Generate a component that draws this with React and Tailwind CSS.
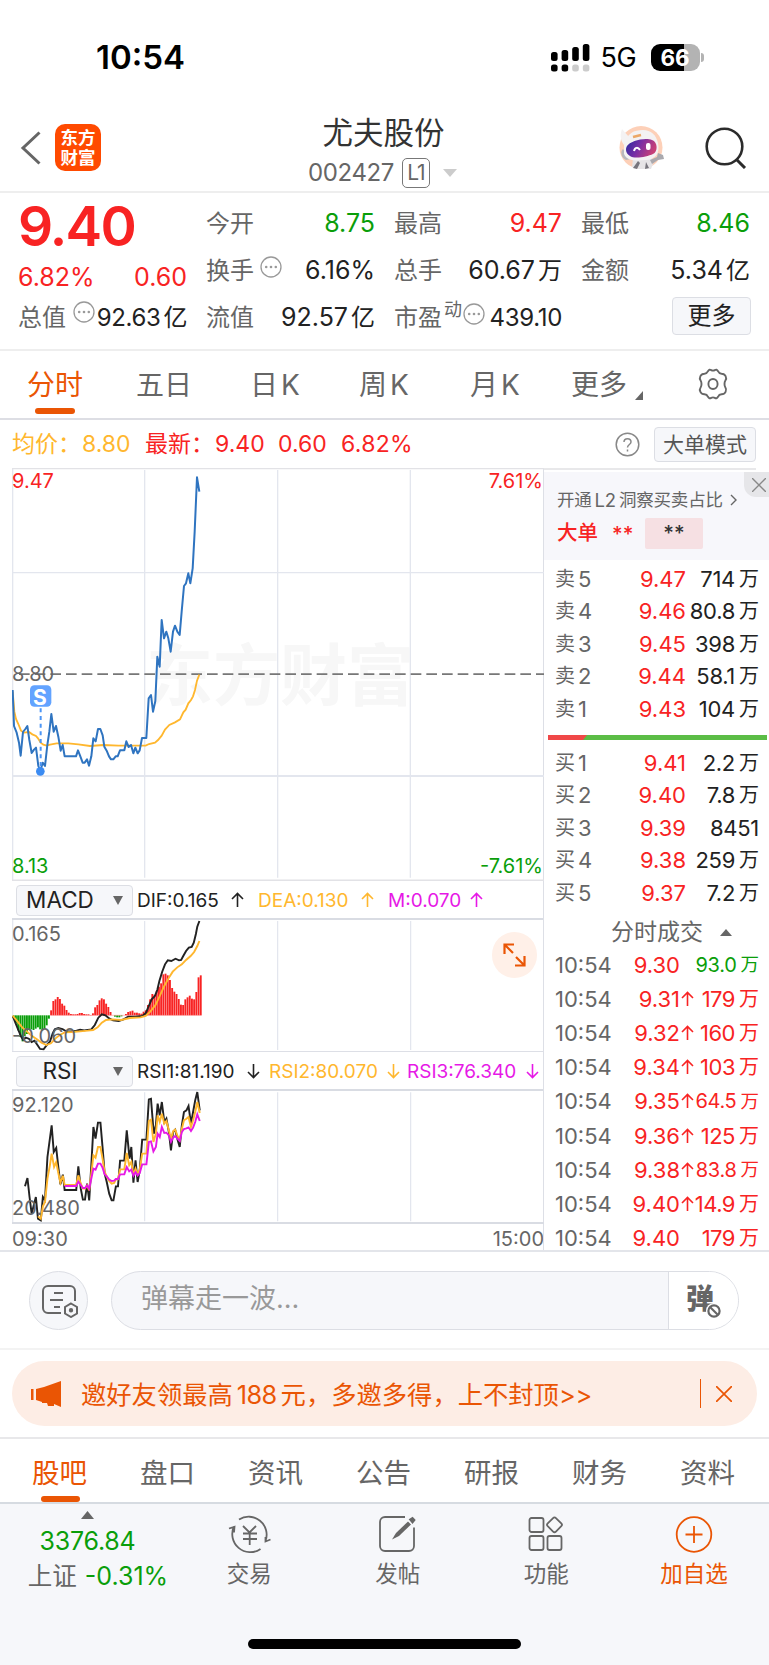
import React from "react";

const PRICE =
  "38,675 42,783 50,803 57,833 62,872 69,801 76,792 82,783 88,825 95,864 102,854 108,848 115,903 121,918 128,893 135,903 142,840 148,800 154,747 161,800 168,783 175,815 182,857 188,840 194,874 228,874 234,856 241,874 248,893 254,893 261,883 267,902 274,874 280,820 287,829 294,792 301,792 308,811 313,845 320,857 327,874 333,883 340,883 347,874 353,874 360,856 373,856 379,829 386,846 393,840 400,865 406,848 413,865 419,856 426,819 439,819 446,700 453,690 459,740 466,708 472,575 479,605 485,465 492,520 499,500 505,520 512,560 519,500 525,482 532,500 539,510 545,440 552,363 558,355 565,325 571,355 578,310 584,200 591,37 598,80";
const AVERAGE =
  "38,680 43,740 48,762 55,777 63,797 72,803 87,801 97,808 108,813 114,820 122,833 130,839 140,842 150,839 170,835 205,835 235,838 270,843 310,840 355,842 437,842 447,837 465,833 474,825 485,812 495,794 508,780 525,772 540,763 550,742 557,734 565,715 573,705 579,694 585,675 591,647 598,629";

const BARS = [
  -8, -25, -45, -65, -78, -62, -56, -44, -42, -44, -40, -36, -42, -45, -40, -30, -10, 15, 43, 48, 55, 49, 35, 29, 16, 8,
  4, 3, 3, 4, 7, 7, 4, 3, 3, 1, 6, 24, 31, 45, 51, 48, 35, 25, 10, 0, -4, -6, -6, -3, 0, 4, 10, 12, 14, 8, 8, 6, 5,
  11, 15, 31, 48, 64, 61, 74, 86, 96, 123, 125, 120, 106, 82, 71, 64, 49, 32, 31, 48, 54, 59, 50, 48, 70, 114, 120,
];
const DIF =
  "36,438 45,462 52,480 60,500 66,510 73,503 82,506 90,516 98,512 106,524 114,537 124,538 134,524 142,515 150,490 156,478 166,474 178,477 188,484 205,484 218,482 228,479 240,481 260,478 270,465 280,443 290,433 300,436 312,446 322,451 338,453 350,449 365,440 385,440 405,438 415,430 425,405 432,388 441,378 448,360 454,333 462,305 470,283 478,271 488,273 500,266 510,271 516,270 522,258 530,243 538,233 546,231 552,218 558,192 562,170 568,153";
const DEA =
  "36,437 50,455 63,472 77,485 90,497 105,508 118,518 132,525 145,520 158,505 170,495 184,487 205,486 228,484 250,482 265,480 278,472 290,458 302,450 320,448 345,450 370,444 400,442 415,438 428,425 443,405 455,378 467,350 480,325 492,305 505,292 518,283 530,270 543,258 553,246 562,228 568,213";

const RSI1 =
  "71,408 78,383 84,440 90,490 96,465 102,440 108,505 116,510 122,440 128,450 135,320 147,225 153,305 160,293 166,350 172,402 179,373 184,419 217,419 223,348 230,415 236,448 242,448 248,400 254,450 260,345 266,230 272,265 279,217 286,217 292,290 298,370 304,395 311,430 318,450 323,450 330,408 336,408 342,331 354,331 361,240 369,325 374,290 380,397 386,330 392,395 398,360 405,268 417,268 424,147 430,145 438,250 444,225 449,160 455,195 461,155 468,215 474,205 481,245 487,300 493,245 499,238 505,265 512,290 518,225 524,185 531,180 537,167 544,220 550,185 556,150 562,125 569,180";
const RSI2 =
  "108,498 116,505 122,468 128,455 135,385 142,345 147,310 154,350 160,335 166,368 172,397 179,376 184,404 217,404 223,375 230,400 236,415 242,415 248,405 254,420 260,370 266,315 272,322 279,290 286,290 292,325 298,365 304,378 311,392 318,400 325,398 330,387 336,387 342,357 354,357 361,308 368,345 374,335 380,374 386,355 392,372 398,357 405,310 417,310 424,212 430,208 437,275 444,250 449,195 455,215 461,190 468,220 474,212 481,240 487,266 493,243 499,238 505,255 512,268 518,235 524,210 531,205 537,200 544,230 550,210 556,185 562,155 569,188";
const RSI3 =
  "184,407 217,407 223,394 230,404 236,413 242,413 248,405 254,415 260,385 266,355 272,358 279,340 286,340 292,352 298,372 304,378 311,388 318,392 325,391 330,386 336,386 342,372 354,372 361,350 368,363 374,358 380,376 386,365 392,375 398,368 405,342 417,342 424,275 430,273 437,303 444,290 449,250 455,260 461,230 468,248 474,247 481,255 487,275 493,262 499,257 505,264 512,272 518,245 524,236 531,234 537,231 544,242 550,232 556,215 562,192 569,212";

const sells = [
  ["卖5", "9.47", "714", "万"],
  ["卖4", "9.46", "80.8", "万"],
  ["卖3", "9.45", "398", "万"],
  ["卖2", "9.44", "58.1", "万"],
  ["卖1", "9.43", "104", "万"],
];
const buys = [
  ["买1", "9.41", "2.2", "万"],
  ["买2", "9.40", "7.8", "万"],
  ["买3", "9.39", "8451", ""],
  ["买4", "9.38", "259", "万"],
  ["买5", "9.37", "7.2", "万"],
];
const trades = [
  ["9.30", "", "93.0"],
  ["9.31", "↑", "179"],
  ["9.32", "↑", "160"],
  ["9.34", "↑", "103"],
  ["9.35", "↑", "64.5"],
  ["9.36", "↑", "125"],
  ["9.38", "↑", "83.8"],
  ["9.40", "↑", "14.9"],
  ["9.40", "", "179"],
];

const Arrow = ({ down, className = "" }) => (
  <svg className={`inline-block shrink-0 ${className}`} width="13" height="16" viewBox="0 0 13 16" fill="none" stroke="currentColor" strokeWidth="1.6">
    <path d={down ? "M6.5 1v13M1 9l5.500 5.500L12 9" : "M6.500 15V2M1 7l5.500-5.500L12 7"} />
  </svg>
);

const Dots = ({ className = "" }) => (
  <svg className={`shrink-0 ${className}`} width="22" height="22" viewBox="0 0 22 22">
    <circle cx="11" cy="11" r="10" fill="none" stroke="#999" strokeWidth="1.3" />
    <circle cx="6.200" cy="11" r="1.300" fill="#999" />
    <circle cx="11" cy="11" r="1.300" fill="#999" />
    <circle cx="15.800" cy="11" r="1.300" fill="#999" />
  </svg>
);

const Num = ({ children, unit }) => (
  <span className="flex items-center">
    <span className="text-[25px]">{children}</span>
    {unit && <span className="ml-[3px]">{unit}</span>}
  </span>
);

const Stat = ({ label, value, unit, color = "text-[#222]", children }) => (
  <div className="flex h-[47px] items-center justify-between">
    <div className="flex items-center text-[#666]">
      {label}
      {children}
    </div>
    <div className={color}>
      <Num unit={unit}>{value}</Num>
    </div>
  </div>
);

const StatusBar = () => (
  <div className="flex h-[115px] items-start justify-between pt-[37px] pr-[65px] pl-[96px]">
    <span className="text-[33px] leading-[40px] font-semibold text-black">10:54</span>
    <div className="flex h-[41px] items-center">
      <svg width="39" height="28" viewBox="0 0 39 28">
        {[0, 10.600, 21.200, 31.800].map((x, i) => (
          <g key={x}>
            <rect x={x} y={[8, 6, 3, 0][i]} width="6.600" height={[9, 11, 14, 17][i]} rx="2.500" />
            <rect x={x} y="20.500" width="6.600" height="7" rx="2.500" fill={i < 2 ? "#000" : "#ccc"} />
          </g>
        ))}
      </svg>
      <span className="ml-[11px] w-[38px] pt-[2px] text-[27px] tracking-[-0.300px] text-black">5G</span>
      <div className="ml-[12px] flex h-[27px] w-[49px] items-center justify-center overflow-hidden rounded-[9px] bg-[linear-gradient(90deg,#000_68%,#b3b3b3_68%)] text-[22.500px] font-bold text-white">
        66
      </div>
      <div className="ml-[1.500px] h-[9px] w-[3px] rounded-r-full bg-[#b3b3b3]" />
    </div>
  </div>
);

const Robot = () => (
  <svg width="46" height="46" viewBox="0 0 46 46">
    <circle cx="22" cy="22.500" r="21.500" fill="#fdd0b8" />
    <path d="M14 34l-1 8 7 2h12l3-8-4-5z" fill="#e6e4e6" />
    <path d="M31 35l7-3 1-4 5 2 1 4-6 1-6 4z" fill="#aaa9ae" />
    <path d="M3 4l7 8-5 8c-4-5-4-11-2-16z" fill="#f4f2f3" />
    <path d="M4 24c-3 2-2 9 3 11l5-1z" fill="#b9b8bd" />
    <path d="M5 20C8 8 15 5 24 5c8 0 13 5 15 13 2 10-2 16-12 17-11 1-19 1-22-6z" fill="#f4f2f3" />
    <path d="M14 12l8-2" stroke="#eca766" strokeWidth="2.500" />
    <path d="M8 21c3-5 18-9 25-6 6 2 6 12 1 14-6 3-19 5-23 2-4-2-5-7-3-10z" fill="url(#visor)" />
    <path d="M15 26c1-4 4-4 6-1" fill="none" stroke="#fff" strokeWidth="2" />
    <rect x="27" y="18" width="4.500" height="7" rx="2" fill="#fff" />
    <path d="M14 43l5-7 2 2-3 6zM27 37l-1 7 4-1" fill="#77757c" />
    <defs>
      <linearGradient id="visor" x1="0" y1="0" x2="1" y2="0.300">
        <stop offset="0" stopColor="#2727a0" />
        <stop offset="0.500" stopColor="#792fa5" />
        <stop offset="1" stopColor="#c74077" />
      </linearGradient>
    </defs>
  </svg>
);

const Header = () => (
  <header className="flex h-[78px] items-start justify-between border-b-2 border-[#eee] pr-[22px] pl-[20px]">
    <div className="flex w-[258px] items-center pt-[9px]">
      <svg width="22" height="34" viewBox="0 0 22 34" fill="none" stroke="#666" strokeWidth="3">
        <path d="M19.500 1.500L3 17l16.500 15.500" />
      </svg>
      <div className="ml-[13px] flex h-[47px] w-[46px] flex-col items-center justify-center rounded-[10px] bg-[#ff4a00] text-[17.500px] leading-[20px] font-bold text-white">
        <span>东方</span>
        <span>财富</span>
      </div>
    </div>
    <div className="flex flex-col items-center">
      <h1 className="h-[33px] text-[30.500px] leading-[35px] text-[#333]">尤夫股份</h1>
      <div className="mt-[10px] -ml-[2px] flex h-[30px] items-center text-[24px] text-[#666]">
        <span className="tracking-[-0.400px]">002427</span>
        <span className="ml-[8px] flex h-[30px] w-[28px] items-center justify-center rounded-[5px] border-[1.500px] border-[#777] text-[21px] tracking-[-1px]">
          L1
        </span>
        <svg className="ml-[13px]" width="14" height="8" viewBox="0 0 14 8">
          <path d="M0 0h14L7 8z" fill="#ccc" />
        </svg>
      </div>
    </div>
    <div className="flex w-[258px] items-center justify-end pt-[10px]">
      <Robot />
      <svg className="ml-[40px]" width="42" height="42" viewBox="0 0 42 42" fill="none" stroke="#2b2b2b" strokeWidth="2.600">
        <circle cx="19.500" cy="19.500" r="17.800" />
        <path d="M31.500 32.500L40 41" strokeWidth="3" />
      </svg>
    </div>
  </header>
);

const Quote = () => (
  <section className="flex h-[158px] border-b-2 border-[#eee] pr-[19px] pl-[18px] text-[24px] leading-none">
    <div className="w-[169px] text-[#f82323]">
      <div className="flex h-[68px] items-start pt-[2px] text-[55px] leading-[62px] font-semibold tracking-[-1.800px]">9.40</div>
      <div className="flex h-[32px] items-center justify-between">
        <Num>6.82%</Num>
        <Num>0.60</Num>
      </div>
      <div className="flex h-[47px] items-center justify-between pt-[3px] text-[#666]">
        <span className="flex">
          总值
          <Dots className="-mt-[5px] ml-[7px]" />
        </span>
        <span className="-ml-[6px] text-[#222]">
          <span className="flex items-center tracking-[-0.400px]">
            92.63<span className="ml-[3px]">亿</span>
          </span>
        </span>
      </div>
    </div>
    <div className="ml-[19px] w-[169px] pt-[7px]">
      <Stat label="今开" value="8.75" color="text-[#0a9e0a]" />
      <Stat label="换手" value="6.16%">
        <Dots className="-mt-[8px] ml-[6px]" />
      </Stat>
      <Stat label="流值" value="92.57" unit="亿" />
    </div>
    <div className="ml-[19px] w-[168px] pt-[7px]">
      <Stat label="最高" value="9.47" color="text-[#f82323]" />
      <Stat label="总手" value="60.67" unit="万" />
      <div className="flex h-[47px] items-center justify-between text-[#666]">
        <span className="flex items-center">
          市盈
          <span className="-mt-[16px] ml-[2px] text-[18px]">动</span>
          <Dots className="-mt-[8px] ml-[1px]" />
        </span>
        <span className="text-[24px] tracking-[-0.300px] text-[#222]">439.10</span>
      </div>
    </div>
    <div className="ml-[19px] w-[169px] pt-[7px]">
      <Stat label="最低" value="8.46" color="text-[#0a9e0a]" />
      <Stat label="金额" value="5.34" unit="亿" />
      <div className="-mr-[1px] flex h-[43px] items-center justify-end">
        <button className="h-[38px] w-[79px] rounded-[4px] border-[1.500px] border-[#dcdee4] bg-[#f6f7fa] text-[#222]">更多</button>
      </div>
    </div>
  </section>
);

const ChartTabs = () => (
  <nav className="flex h-[69px] border-b-2 border-[#dddee4] pl-[27px] text-[28px] leading-[68px] text-[#666]">
    <div className="w-[109px] text-[#ea5504]">
      <div className="h-[57px]">分时</div>
      <div className="ml-[8px] h-[6px] w-[40px] rounded-full bg-[#ea5504]" />
    </div>
    <div className="w-[114px]">五日</div>
    <div className="w-[109px]">日<span className="ml-[3px]">K</span></div>
    <div className="w-[111px]">周<span className="ml-[3px]">K</span></div>
    <div className="w-[101px]">月<span className="ml-[3px]">K</span></div>
    <div className="flex w-[126px]">
      更多
      <svg className="mt-[40px] ml-[8px]" width="8" height="9" viewBox="0 0 8 9">
        <path d="M8 0v9H0z" fill="#666" />
      </svg>
    </div>
    <svg className="mt-[17px]" width="32" height="32" viewBox="0 0 32 32" fill="none" stroke="#666" strokeWidth="1.900" strokeLinejoin="round">
      <path d="M11 3.200c1-1.800 2-1.800 3.200-1.100 1.200.7 2.400.7 3.600 0C19 1.400 20 1.400 21 3.200c.8 1.800 1.700 2.400 3.600 2.500 2 0 2.900.3 4 2.500 1 2 .9 2.800-.2 4.300-1.200 1.700-1.200 5.300 0 7 1.100 1.500 1.200 2.300.2 4.300-1.100 2.200-2 2.500-4 2.500-1.900.1-2.800.7-3.600 2.500-1 1.800-2 1.800-3.200 1.100-1.200-.7-2.400-.7-3.600 0-1.200.7-2.200.7-3.200-1.100-.8-1.800-1.700-2.400-3.600-2.500-2 0-2.900-.3-4-2.500-1-2-.9-2.800.2-4.300 1.200-1.700 1.200-5.300 0-7-1.100-1.500-1.200-2.300-.2-4.300 1.100-2.200 2-2.500 4-2.500 1.900-.1 2.800-.7 3.600-2.500z" />
      <ellipse cx="16" cy="16" rx="4.600" ry="5" />
    </svg>
  </nav>
);

const InfoRow = () => (
  <div className="flex h-[48px] items-center pt-[1px] pr-[13px] pl-[12px] text-[23px] leading-none text-[#f82323]">
    <div className="flex text-[#ffb72e]">
      <span className="w-[70px]">均价：</span>
      <span className="w-[63px]">8.80</span>
    </div>
    <span className="w-[70px]">最新：</span>
    <span className="w-[63px]">9.40</span>
    <span className="w-[63px]">0.60</span>
    <span className="tracking-[0.300px]">6.82%</span>
    <svg className="ml-auto" width="25" height="25" viewBox="0 0 25 25" fill="none" stroke="#888" strokeWidth="1.500">
      <circle cx="12.500" cy="12.500" r="11.300" />
      <path d="M9 10c0-4.500 7-4.500 7 0 0 2.500-3.500 2.500-3.500 5.500M12.500 17.500v2" />
    </svg>
    <button className="ml-[14px] h-[35px] w-[102px] rounded-[4px] border-[1.500px] border-[#dcdee4] bg-[#f6f7fa] text-[21px] text-[#555]">
      大单模式
    </button>
  </div>
);

const PriceChart = () => (
  <div className="relative h-[413px] text-[20px] leading-none">
    <span className="absolute top-[174px] left-[134px] text-[67px] leading-[67px] font-bold text-[#f7f7f7]">东方财富</span>
    <svg className="absolute inset-0" width="532" height="413" viewBox="36 9 1596 1239" fill="none">
      <g stroke="#e3e6ee" strokeWidth="4">
        <path d="M36 323h1596M434 15v1223M833 15v1223M1231 15v1223M38 9v1239" />
        <path d="M36 933h1596" strokeWidth="6" />
        <path d="M36 10.500h1596M36 1246h1596" stroke="#e2e2e6" strokeWidth="5" />
      </g>
      <path d="M57 627.500h1575" stroke="#777" strokeWidth="5" strokeDasharray="32 15" />
      <polyline points={AVERAGE} stroke="#ffb72e" strokeWidth="5.500" />
      <polyline points={PRICE} stroke="#2f74c0" strokeWidth="6" strokeLinejoin="round" />
      <path d="M122 730v175" stroke="#4c95f5" strokeWidth="6" strokeDasharray="12 11" />
      <circle cx="121" cy="919" r="13" fill="#3b8bf2" />
      <rect x="90" y="661" width="64" height="64" rx="13" fill="#62a3ff" />
    </svg>
    <span className="absolute top-[219px] left-[17px] w-[22px] text-center text-[21px] font-bold text-white">S</span>
    <span className="absolute top-[3px] left-0 text-[#f82323]">9.47</span>
    <span className="absolute top-[3px] right-[1px] text-[#f82323]">7.61%</span>
    <span className="absolute top-[196px] left-0 text-[#666]">8.80</span>
    <span className="absolute top-[388px] left-0 text-[#0a9e0a]">8.13</span>
    <span className="absolute top-[388px] right-[1px] text-[#0a9e0a]">-7.61%</span>
  </div>
);

const IndicatorHead = ({ name, children }) => (
  <div className="flex h-[39px] items-center border-b-2 border-[#d9dce3] pt-[1px] pl-[4px] text-[19px] leading-none">
    <button className="flex h-[31px] w-[117px] shrink-0 items-center rounded-[4px] border-[1.500px] border-[#dcdee4] bg-[#f6f7fa] text-[22.500px] text-[#222]">
      <span className="w-[86px] text-center">{name}</span>
      <svg className="ml-[10px]" width="10" height="9" viewBox="0 0 10 9">
        <path d="M0 0h10L5 9z" fill="#666" />
      </svg>
    </button>
    {children}
  </div>
);

const Macd = () => (
  <div className="relative h-[132px] border-b-[1.500px] border-[#dddfe6]">
    <svg width="532" height="131" viewBox="34 150 1516 393" preserveAspectRatio="none" fill="none">
      <path d="M36 145v400M412 153v387M791 153v387M1170 153v387" stroke="#e3e6ee" strokeWidth="3.500" />
      {BARS.map((v, i) => (
        <rect key={i} x={36.200 + i * 6.270} y={v > 0 ? 436 - v : 436} width="5.400" height={Math.abs(v)} fill={v > 0 ? "#f82323" : "#0a9e0a"} />
      ))}
      <path d="M144 436h430" stroke="#f88" strokeWidth="1.500" />
      <polyline points={DIF} stroke="#222" strokeWidth="5.500" />
      <polyline points={DEA} stroke="#ffb72e" strokeWidth="5.500" />
    </svg>
    <span className="absolute top-[4px] left-0 text-[20px] leading-none text-[#666]">0.165</span>
    <span className="absolute bottom-[5px] left-0 text-[20px] leading-none text-[#666]">-0.060</span>
    <div className="absolute top-[12px] right-[7px] flex h-[46px] w-[45px] items-center justify-center rounded-full bg-[#fff0e8]">
      <svg width="23" height="24" viewBox="0 0 23 24" fill="none" stroke="#ea5504" strokeWidth="2.200">
        <path d="M1.500 11V1.500H11M2 2l8 8M21.500 13v9.500H12M21 22l-8-8" />
      </svg>
    </div>
  </div>
);

const Rsi = () => (
  <div className="relative h-[133px] border-b-2 border-[#d9dce3]">
    <svg width="532" height="131" viewBox="34 122 1516 393" preserveAspectRatio="none" fill="none" strokeWidth="5.500">
      <path d="M36 120v400M412 126v387M791 126v387M1170 126v387" stroke="#e3e6ee" strokeWidth="3.500" />
      <polyline points={RSI1} stroke="#222" />
      <polyline points={RSI2} stroke="#ffb72e" />
      <polyline points={RSI3} stroke="#e619e6" />
    </svg>
    <span className="absolute top-[4px] left-0 text-[20px] leading-none text-[#666]">92.120</span>
    <span className="absolute bottom-[4px] left-0 text-[20px] leading-none text-[#666]">20.480</span>
  </div>
);

const OrderRow = ({ row }) => (
  <div className="flex h-[32.500px] items-center pr-[10px] pl-[11px] text-[22px] leading-none">
    <span className="flex w-[54px] items-center text-[#666]">
      <span className="text-[20px]">{row[0][0]}</span>
      <span className="ml-[3px]">{row[0][1]}</span>
    </span>
    <span className="w-[77px] text-right text-[#f82323]">{row[1]}</span>
    <span className="flex flex-1 items-center justify-end text-[#222]">
      <span className="-ml-[20px] tracking-[-0.300px]">{row[2]}</span>
      {row[3] && <span className="ml-[4px] text-[20px]">{row[3]}</span>}
    </span>
  </div>
);

const SidePanel = () => (
  <aside className="-ml-[1px] flex w-[226px] shrink-0 flex-col border-l-[1.500px] border-[#dddfe6]">
    <div className="mr-[13px] h-[2px] shrink-0 bg-[#e8e8ea]" />
    <div className="relative mt-[2px] h-[88px] shrink-0 bg-[#f7f7fb] pt-[17px] pl-[13px]">
      <div className="flex h-[22px] items-center text-[17.500px] leading-none tracking-[-0.200px] text-[#666]">
        开通<span className="mx-[3px] text-[18.500px]">L2</span>洞察买卖占比
        <svg className="ml-[7px]" width="7" height="12" viewBox="0 0 7 12" fill="none" stroke="#666" strokeWidth="1.400">
          <path d="M1 1l5 5-5 5" />
        </svg>
      </div>
      <div className="mt-[7px] flex h-[31px] items-center text-[20.500px] leading-none font-medium text-[#f82323]">
        大单<span className="ml-[14px] w-[19px] pt-[2px]">**</span>
        <span className="ml-[14px] flex h-[31px] w-[58px] items-center justify-center rounded-[2px] bg-[#f6e0e3] text-[#333]">**</span>
      </div>
      <div className="absolute top-0 right-0 flex h-[25px] w-[25px] items-center justify-center rounded-bl-[12px] bg-[#e6e6e9]">
        <svg className="ml-[4px]" width="14" height="14" viewBox="0 0 14 14" stroke="#888" strokeWidth="1.400">
          <path d="M0 0l14 14M14 0L0 14" />
        </svg>
      </div>
    </div>
    <div className="mt-[2.500px]">
      {sells.map((r) => (
        <OrderRow key={r[0]} row={r} />
      ))}
    </div>
    <svg className="mt-[9.500px] ml-[4px] shrink-0" width="219" height="5" viewBox="0 0 219 5">
      <path d="M0 0h219v5H0z" fill="#5bbd46" />
      <path d="M0 0h39l-4 5H0z" fill="#f04848" />
    </svg>
    <div className="mt-[7px]">
      {buys.map((r) => (
        <OrderRow key={r[0]} row={r} />
      ))}
    </div>
    <div className="flex h-[38.500px] shrink-0 items-center pt-[9px] pl-[67px] text-[23px] leading-none text-[#666]">
      分时成交
      <svg className="ml-[17px]" width="12" height="7" viewBox="0 0 12 7">
        <path d="M0 7h12L6 0z" fill="#666" />
      </svg>
    </div>
    {trades.map((t, i) => (
      <div key={i} className="flex h-[34.200px] shrink-0 items-center pr-[10px] pl-[11px] text-[22px] leading-none text-[#f82323]">
        <span className="w-[58px] text-[#666]">10:54</span>
        <span className="w-[67px] text-right">{t[0]}</span>
        <span className="flex w-[14px] shrink-0 justify-end">{t[1] && <Arrow />}</span>
        <span className={i === 0 ? "flex flex-1 items-center justify-end text-[#0a9e0a]" : "flex flex-1 items-center justify-end"}>
          <span className={t[2].length > 3 && t[2] !== "14.9" ? "text-[20px] tracking-[-0.300px]" : "tracking-[-0.500px]"}>{t[2]}</span>
          <span className={t[2].length > 3 && t[2] !== "14.9" ? "ml-[4px] text-[18.500px]" : "ml-[4px] text-[20px]"}>万</span>
        </span>
      </div>
    ))}
  </aside>
);

const CommentBar = () => (
  <div className="flex h-[98px] items-center border-b-2 border-[#f3f3f3] pl-[29px]">
    <div className="flex h-[59px] w-[59px] items-center justify-center rounded-full border-[1.500px] border-[#dcdee4] bg-[#f6f7fa]">
      <svg className="mt-[2px] ml-[3px]" width="37" height="33" viewBox="0 0 37 33" fill="none" stroke="#666" strokeWidth="2">
        <path d="M33 16V6a5 5 0 0 0-5-5H6a5 5 0 0 0-5 5v17a5 5 0 0 0 5 5h13" />
        <path d="M12 8h9M8 15h13M12 22h6" />
        <path d="M29 18.500l6 3.500v6.500L29 32l-6-3.500V22z" />
        <circle cx="29" cy="25.200" r="1.200" fill="#666" />
      </svg>
    </div>
    <div className="ml-[23px] flex h-[59px] w-[628px] overflow-hidden rounded-full border-[1.500px] border-[#dcdee4] bg-[#f6f7fa]">
      <div className="flex-1 pl-[29px] text-[27px] leading-[53px] text-[#999]">弹幕走一波...</div>
      <div className="relative w-[70px] border-l-[1.500px] border-[#dcdee4] bg-white pl-[17px] text-[28px] leading-[54px] font-black text-[#666]">
        弹
        <svg className="absolute top-[31px] left-[37px]" width="16" height="16" viewBox="0 0 16 16">
          <circle cx="8" cy="8" r="8" fill="#fff" />
          <circle cx="8" cy="8" r="5.600" fill="none" stroke="#666" strokeWidth="2.200" />
          <path d="M4 4l8 8" stroke="#666" strokeWidth="2.200" />
        </svg>
      </div>
    </div>
  </div>
);

const Banner = () => (
  <div className="h-[89px] border-b-2 border-[#e8e8ea] px-[12px] pt-[11px]">
    <div className="flex h-[65px] items-center rounded-full bg-[#fdede5] pr-[25px] pl-[19px] text-[#ea5504]">
      <svg width="30" height="26" viewBox="0 0 30 26" fill="#ea5504">
        <path d="M0 8h2.500v11H0zM5 8l8-2L30 0v26l-7-3v2h-6l-1-3h-5v-1L5 19z" />
      </svg>
      <span className="ml-[20px] flex pt-[2px] text-[25.300px] leading-none">
        邀好友领最高<span className="mx-[4px] tracking-[-0.600px]">188</span>元，多邀多得，上不封顶<span>&gt;&gt;</span>
      </span>
      <span className="ml-auto h-[29px] w-[1.500px] bg-[#ea5504]" />
      <svg className="ml-[15px]" width="16" height="16" viewBox="0 0 16 16" stroke="#ea5504" strokeWidth="1.700">
        <path d="M0 0l16 16M16 0L0 16" />
      </svg>
    </div>
  </div>
);

const BottomTabs = () => (
  <nav className="flex h-[65px] border-b-2 border-[#d6dbe1] pl-[32px] text-[27.500px] leading-[68px] text-[#666]">
    <div className="w-[108px] shrink-0 text-[#ea5504]">
      <div className="h-[57px]">股吧</div>
      <div className="ml-[9px] h-[6px] w-[39px] rounded-full bg-[#ea5504]" />
    </div>
    {["盘口", "资讯", "公告", "研报", "财务", "资料"].map((t) => (
      <div key={t} className="w-[108px] shrink-0">
        {t}
      </div>
    ))}
  </nav>
);

const toolIcons = {
  交易: (
    <g>
      <path d="M11 5.500A18 18 0 0 1 37.500 27M32.500 35A18 18 0 0 1 6 12.500M1 14.500l5.500-1.700L6 18.500M42.500 25.500l-5 2V23" />
      <path d="M15 12l6.500 6.500L28 12M15 19.500h14M15 25h14M21.700 18.500V31" />
    </g>
  ),
  发帖: (
    <g>
      <path d="M29 3H9a5 5 0 0 0-5 5v24a5 5 0 0 0 5 5h24a5 5 0 0 0 5-5V13.500" />
      <path d="M16 25.500l4-6.500 12-11.500 3 3L23 22z" fill="#666" stroke="none" />
      <path d="M34 5.500l2.500-1.500 2 2-2 2.500z" fill="#666" />
    </g>
  ),
  功能: (
    <g>
      <rect x="4.500" y="4" width="14" height="14" rx="2" />
      <rect x="4.500" y="22" width="14" height="14" rx="2" />
      <rect x="22.500" y="22" width="14" height="14" rx="2" />
      <rect x="23.700" y="5" width="11.600" height="11.600" rx="2" transform="rotate(45 29.500 10.800)" />
    </g>
  ),
  加自选: (
    <g>
      <circle cx="21" cy="20.500" r="17.300" />
      <path d="M21 12v17M12.500 20.500h17" />
    </g>
  ),
};

const BottomBar = () => (
  <footer className="flex h-[161px] flex-col bg-[#f6f7fa] text-[#666]">
    <div className="flex">
      <div className="flex w-[175px] flex-col items-center pt-[7px] text-[24.500px] leading-none">
        <svg width="13" height="8" viewBox="0 0 13 8">
          <path d="M0 8h13L6.500 0z" fill="#666" />
        </svg>
        <div className="mt-[6px] flex h-[32px] items-center text-[25px] tracking-[-0.200px] text-[#0a9e0a]">3376.84</div>
        <div className="mt-[2px] flex h-[34px] items-center pl-[21px]">
          上证<span className="ml-[8px] text-[25px] text-[#0a9e0a]">-0.31%</span>
        </div>
      </div>
      {Object.keys(toolIcons).map((name) => (
        <div
          key={name}
          className={name === "加自选" ? "flex w-[147px] flex-col items-center pt-[10px] text-[#ea5504]" : "flex w-[148.500px] flex-col items-center pt-[10px]"}
        >
          <svg width="43" height="41" viewBox="0 0 43 41" fill="none" stroke="currentColor" strokeWidth="1.800">
            {toolIcons[name]}
          </svg>
          <span className="mt-[6px] text-[22.500px] leading-[26px]">{name}</span>
        </div>
      ))}
    </div>
    <div className="mx-auto mt-auto mb-[16px] h-[10px] w-[273px] rounded-full bg-black" />
  </footer>
);

export default function App() {
  return (
    <div className="h-[1665px] w-[769px] overflow-hidden bg-white font-['Inter','Noto_Sans_CJK_SC',sans-serif]">
      <StatusBar />
      <Header />
      <Quote />
      <ChartTabs />
      <InfoRow />
      <main className="flex h-[784px] border-b-2 border-[#e3e5ea]">
        <div className="ml-[12px] w-[532px] shrink-0">
          <PriceChart />
          <IndicatorHead name="MACD">
            <span className="ml-[4px] flex w-[121px] items-center text-[#222]">DIF:0.165<Arrow className="ml-[12px]" /></span>
            <span className="flex w-[130px] items-center text-[#ffb72e]">DEA:0.130<Arrow className="ml-[12px]" /></span>
            <span className="flex items-center text-[#e619e6]">M:0.070<Arrow className="ml-[9px]" /></span>
          </IndicatorHead>
          <Macd />
          <IndicatorHead name="RSI">
            <span className="ml-[4px] flex w-[132px] shrink-0 items-center text-[#222]">RSI1:81.190<Arrow down className="ml-[12px]" /></span>
            <span className="flex w-[138px] shrink-0 items-center text-[#ffb72e]">RSI2:80.070<Arrow down className="ml-[9px]" /></span>
            <span className="flex shrink-0 items-center text-[#e619e6]">RSI3:76.340<Arrow down className="ml-[10px]" /></span>
          </IndicatorHead>
          <Rsi />
          <div className="flex h-[26px] items-center justify-between pt-[3px] text-[20px] leading-none text-[#666]">
            <span>09:30</span>
            <span>15:00</span>
          </div>
        </div>
        <SidePanel />
      </main>
      <CommentBar />
      <Banner />
      <BottomTabs />
      <BottomBar />
    </div>
  );
}
